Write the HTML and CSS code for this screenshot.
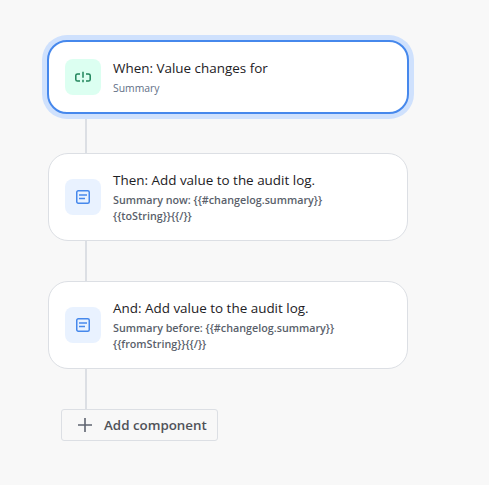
FILE: index.html
```html
<!DOCTYPE html>
<html lang="en">
<head>
<meta charset="utf-8">
<title>Automation rule</title>
<link rel="stylesheet" href="styles.css">
</head>
<body>
<main class="flow">
  <section class="card card-active">
    <div class="icon icon-green">
      <svg width="16" height="16" viewBox="0 0 16 16" fill="none" stroke="#1f845a" stroke-width="1.5">
        <path d="M5 5H2.6Q.8 5 .8 6.6v3.8Q.8 12 2.6 12H5"/>
        <path d="M11 5h2.4q1.8 0 1.8 1.6v3.8q0 1.6-1.8 1.6H11"/>
        <path d="M8 2.8v6"/>
        <path d="M8 10.8v2.4"/>
      </svg>
    </div>
    <div class="text">
      <div class="title">When: Value changes for</div>
      <div class="sub">Summary</div>
    </div>
  </section>
  <div class="line line-first"></div>
  <section class="card">
    <div class="icon icon-blue">
      <svg width="16" height="16" viewBox="0 0 16 16" fill="none" stroke="#4688ec" stroke-width="1.5">
        <rect x="1.75" y="1.75" width="12.5" height="12.5" rx="1.5"/>
        <path d="M4 6h8"/>
        <path d="M4 9.5h6"/>
      </svg>
    </div>
    <div class="text">
      <div class="title">Then: Add value to the audit log.</div>
      <div class="detail">Summary now: {{#changelog.summary}}<br>{{toString}}{{/}}</div>
    </div>
  </section>
  <div class="line"></div>
  <section class="card">
    <div class="icon icon-blue">
      <svg width="16" height="16" viewBox="0 0 16 16" fill="none" stroke="#4688ec" stroke-width="1.5">
        <rect x="1.75" y="1.75" width="12.5" height="12.5" rx="1.5"/>
        <path d="M4 6h8"/>
        <path d="M4 9.5h6"/>
      </svg>
    </div>
    <div class="text">
      <div class="title">And: Add value to the audit log.</div>
      <div class="detail">Summary before: {{#changelog.summary}}<br>{{fromString}}{{/}}</div>
    </div>
  </section>
  <div class="line"></div>
  <button class="add" type="button">
    <svg width="16" height="16" viewBox="0 0 16 16" fill="none" stroke="#5f6470" stroke-width="1.6">
      <path d="M8 1v14M1 8h14"/>
    </svg>
    <span>Add component</span>
  </button>
</main>
</body>
</html>
```
FILE: styles.css
```css
html, body {
  margin: 0;
  height: 100%;
  background: #f8f8f8;
}
body {
  font-family: "Open Sans", "Noto Sans", sans-serif;
  color: #172b4d;
  overflow: hidden;
}
.flow {
  width: 360px;
  padding: 40px 0 0 48px;
  display: flex;
  flex-direction: column;
  align-items: flex-start;
}
.card {
  box-sizing: border-box;
  width: 360px;
  display: flex;
  align-items: center;
  gap: 12px;
  padding: 16px;
  background: #fff;
  border: 1px solid #dcdfe4;
  border-radius: 20px;
}
.card-active {
  width: 362px;
  margin: 0 -1px;
  border: 2px solid #4688ec;
  box-shadow: 0 0 0 5px #cfe1fd;
  position: relative;
}
.icon {
  flex: none;
  width: 36px;
  height: 36px;
  border-radius: 8px;
  display: flex;
  align-items: center;
  justify-content: center;
}
.icon-green { background: #dcfff1; }
.icon-blue { background: #e9f2ff; }
.title {
  font-size: 13.45px;
  line-height: 20px;
  margin-bottom: 2px;
  color: #1d2125;
}
.sub {
  font-size: 10.4px;
  line-height: 16px;
  color: #626f86;
}
.detail {
  font-size: 10.75px;
  line-height: 16px;
  font-weight: 600;
  color: #5a5f6b;
}
.line {
  width: 2px;
  height: 40px;
  margin-left: 37px;
  background: #dcdfe4;
}
.line-first { height: 39px; }
.add {
  box-sizing: border-box;
  width: 157px;
  height: 32px;
  margin-left: 13px;
  padding: 0 0 0 15px;
  display: flex;
  align-items: center;
  gap: 11px;
  background: #f8f8f8;
  border: 1px solid #dcdfe4;
  border-radius: 3px;
  font-family: inherit;
  font-size: 13.35px;
  font-weight: 600;
  color: #505258;
}
```
